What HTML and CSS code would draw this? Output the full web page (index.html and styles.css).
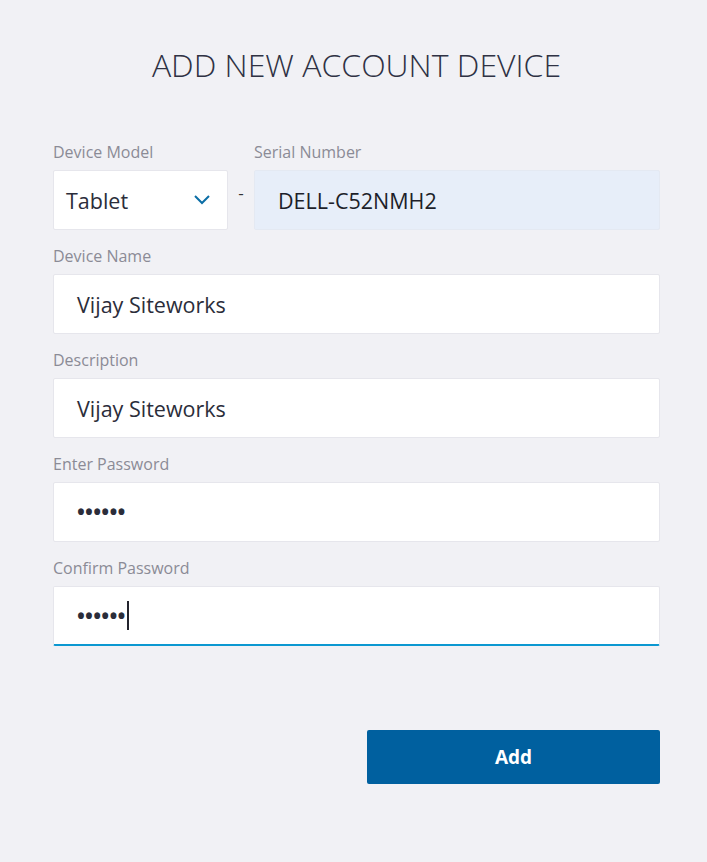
FILE: index.html
```html
<!DOCTYPE html>
<html lang="en">
<head>
    <meta charset="UTF-8">
    <meta name="viewport" content="width=device-width, initial-scale=1.0">
    <title>Add New Account Device</title>
    <link rel="stylesheet" href="styles.css">
</head>
<body>

    <div class="page">
        <h1 class="title">ADD NEW ACCOUNT DEVICE</h1>

        <!-- Modello e numero di serie -->
        <div class="row">
            <div class="field model-field">
                <label class="label">Device Model</label>
                <div class="box select-box">
                    <span>Tablet</span>
                    <svg class="chevron" width="18" height="12" viewBox="0 0 18 12">
                        <path d="M2 2 L9 9 L16 2" fill="none" stroke="#0b6ea6" stroke-width="2"/>
                    </svg>
                </div>
            </div>
            <span class="dash">-</span>
            <div class="field serial-field">
                <label class="label">Serial Number</label>
                <div class="box serial-box">DELL-C52NMH2</div>
            </div>
        </div>

        <div class="field">
            <label class="label">Device Name</label>
            <div class="box">Vijay Siteworks</div>
        </div>

        <div class="field">
            <label class="label">Description</label>
            <div class="box">Vijay Siteworks</div>
        </div>

        <div class="field">
            <label class="label">Enter Password</label>
            <div class="box password">••••••</div>
        </div>

        <div class="field">
            <label class="label">Confirm Password</label>
            <div class="box password focused">••••••<span class="caret"></span></div>
        </div>

        <div class="actions">
            <button class="add-button">Add</button>
        </div>
    </div>

</body>
</html>
```

FILE: styles.css
```css
body {
    margin: 0;
    padding: 0;
    background-color: #f1f1f5;
    font-family: "Open Sans", "Noto Sans", sans-serif;
}
.page {
    width: 607px;
    margin-left: 53px;
    padding-top: 43px;
}
.title {
    margin: 0 0 55px 0;
    text-align: center;
    font-size: 32px;
    font-weight: 300;
    color: #2f3244;
}
.row {
    display: flex;
    align-items: flex-start;
}
.row .field {
    margin-top: 0;
}
.model-field {
    width: 175px;
}
.serial-field {
    flex: 1;
}
.dash {
    width: 26px;
    text-align: center;
    margin-top: 40px;
    font-size: 17px;
    color: #333;
}
.field {
    margin-top: 15px;
}
.label {
    display: block;
    font-size: 16px;
    color: #8b8b96;
    line-height: 22px;
    margin-bottom: 7px;
}
.box {
    box-sizing: border-box;
    height: 60px;
    background-color: #ffffff;
    border: 1px solid #e6e6ec;
    border-radius: 2px;
    padding-left: 23px;
    display: flex;
    align-items: center;
    font-size: 21.5px;
    color: #2b2d3a;
}
.select-box {
    padding-left: 12px;
    padding-right: 16px;
    justify-content: space-between;
}
.serial-box {
    background-color: #e7eef9;
    border-color: #e4e9f2;
    color: #1d1f2a;
}
.password {
    font-size: 21px;
    letter-spacing: 0.2px;
    font-weight: 700;
    color: #2b2d3a;
}
.focused {
    border-bottom: 2px solid #0b98d1;
}
.caret {
    display: inline-block;
    width: 2px;
    height: 29px;
    background-color: #23242e;
    margin-left: 1px;
}
.actions {
    display: flex;
    justify-content: flex-end;
    margin-top: 84px;
}
.add-button {
    width: 293px;
    height: 54px;
    background-color: #00609f;
    color: white;
    font-family: "Open Sans", "Noto Sans", sans-serif;
    font-size: 19px;
    font-weight: 700;
    border: none;
    border-radius: 2px;
}
```
